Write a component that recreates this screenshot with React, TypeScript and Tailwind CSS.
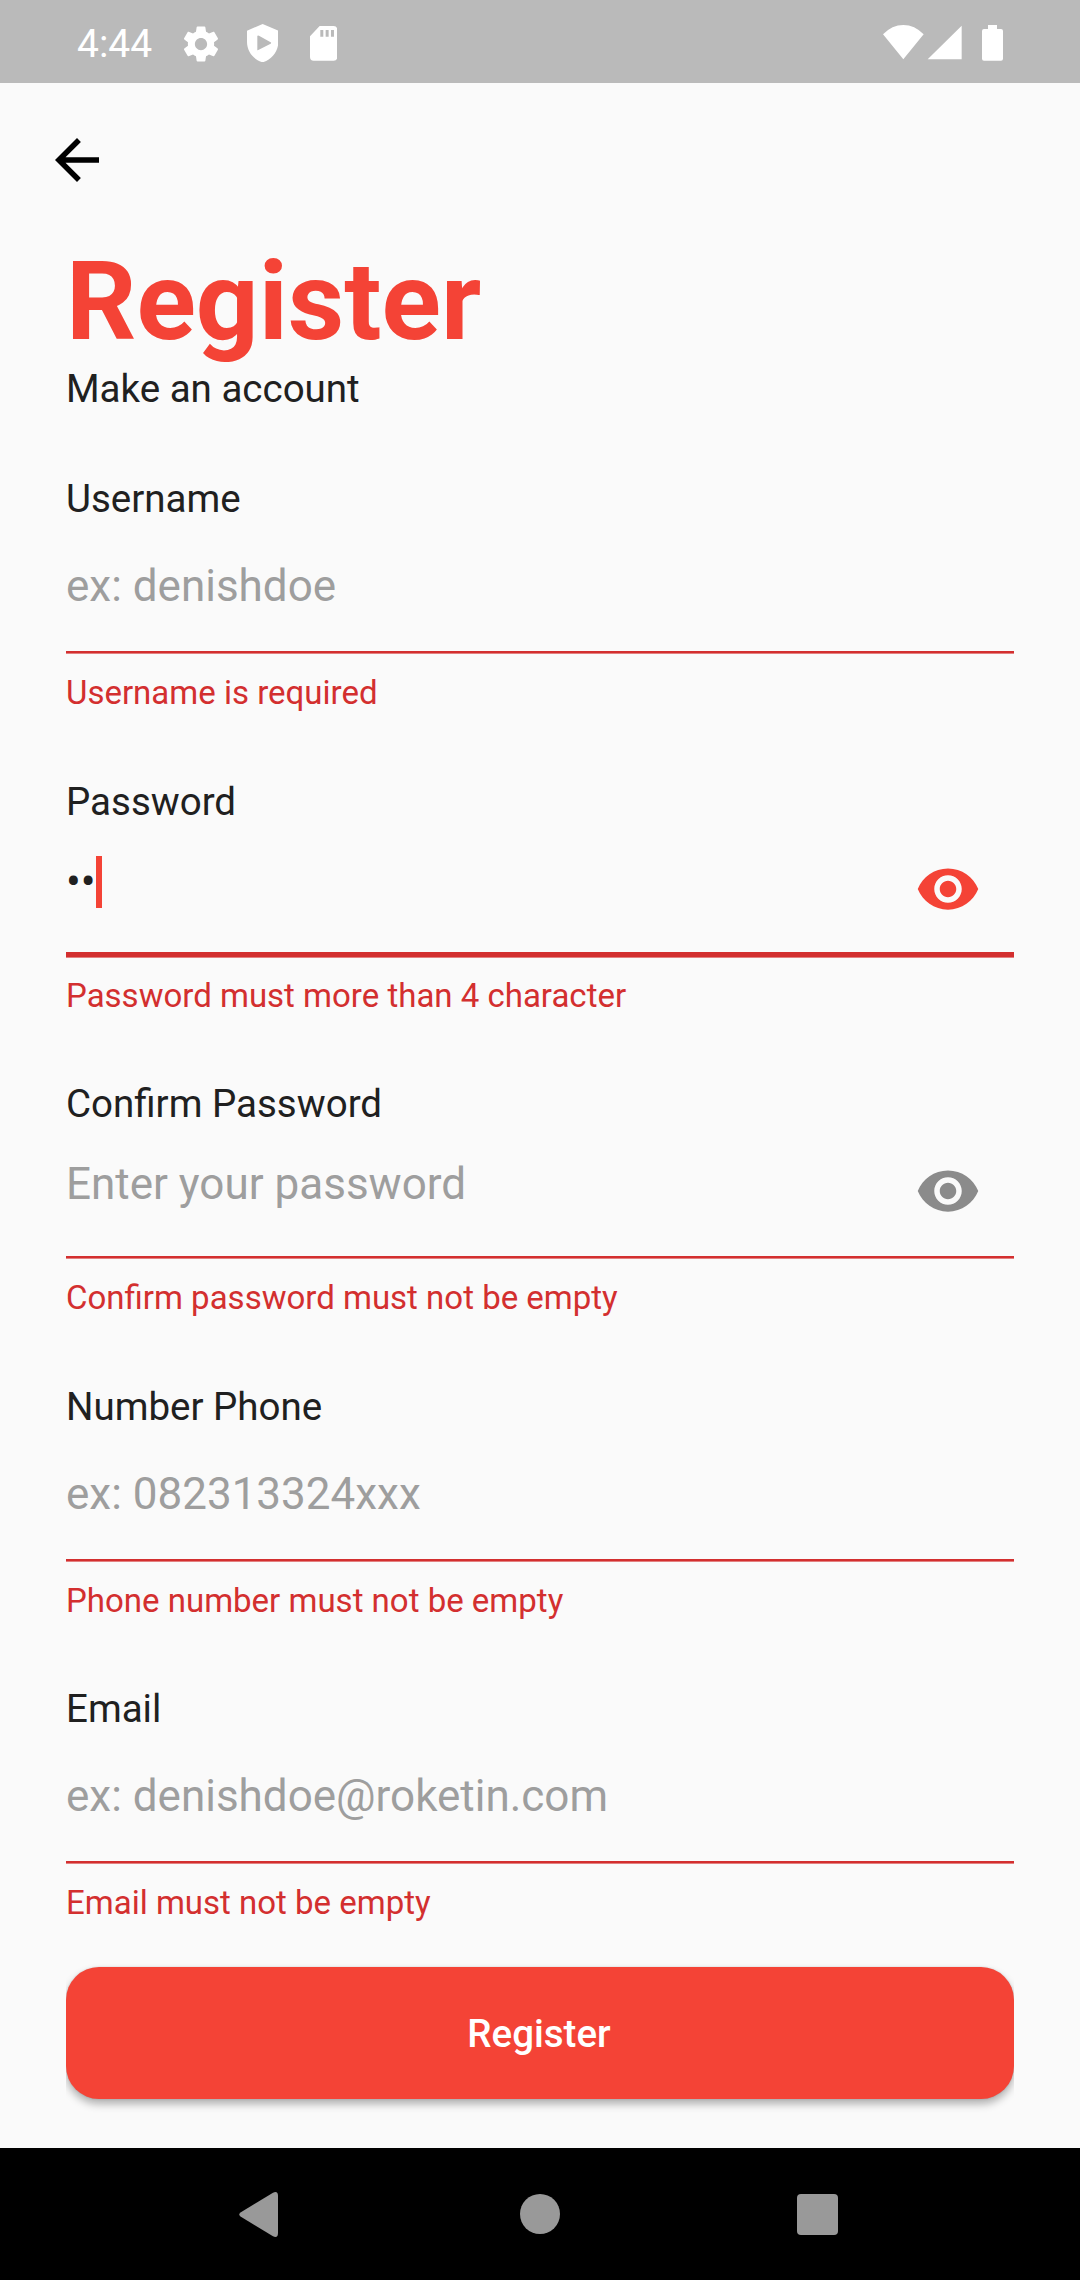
import React from 'react';

const EYE = 'M12 4.5C7 4.5 2.73 7.61 1 12c1.73 4.39 6 7.5 11 7.5s9.27-3.11 11-7.5c-1.73-4.39-6-7.5-11-7.5zM12 17c-2.76 0-5-2.24-5-5s2.24-5 5-5 5 2.24 5 5-2.24 5-5 5zm0-8c-1.66 0-3 1.34-3 3s1.34 3 3 3 3-1.34 3-3-1.34-3-3-3z';
const GEAR = 'M19.43 12.98c.04-.32.07-.64.07-.98s-.03-.66-.07-.98l2.11-1.65c.19-.15.24-.42.12-.64l-2-3.46c-.12-.22-.39-.3-.61-.22l-2.49 1c-.52-.4-1.08-.73-1.69-.98l-.38-2.65C14.46 2.18 14.25 2 14 2h-4c-.25 0-.46.18-.49.42l-.38 2.65c-.61.25-1.17.59-1.69.98l-2.49-1c-.23-.09-.49 0-.61.22l-2 3.46c-.13.22-.07.49.12.64l2.11 1.65c-.04.32-.07.65-.07.98s.03.66.07.98l-2.11 1.65c-.19.15-.24.42-.12.64l2 3.46c.12.22.39.3.61.22l2.49-1c.52.4 1.08.73 1.69.98l.38 2.65c.03.24.24.42.49.42h4c.25 0 .46-.18.49-.42l.38-2.65c.61-.25 1.17-.59 1.69-.98l2.49 1c.23.09.49 0 .61-.22l2-3.46c.12-.22.07-.49-.12-.64l-2.11-1.65zM12 15.5c-1.93 0-3.5-1.57-3.5-3.5s1.57-3.5 3.5-3.5 3.5 1.57 3.5 3.5-1.57 3.5-3.5 3.5z';
const BACK = 'M20 11H7.83l5.59-5.59L12 4l-8 8 8 8 1.41-1.41L7.83 13H20v-2z';
const SHIELD = 'M47 0L94 20V54C94 83 73 108 47 115C21 108 0 83 0 54V20ZM31 37V77Q31 80 34 78L71 59Q74 57 71 55L36 35Q31 33 31 37Z';
const SD_CARD = 'M29 0H71Q82 0 82 11V93Q82 104 71 104H11Q0 104 0 93V31ZM31 12V32H40V12ZM47 12V32H56V12ZM63 12V32H72V12Z';
const STATUS = 'M0 28Q27 0 61 0T122 28L61 103ZM134 103L236 2V103ZM315 0H342V12H354Q360 12 360 18V101Q360 107 354 107H303Q297 107 297 101V18Q297 12 303 12H315Z';

type IconProps = { d: string; className: string; viewBox?: string };

function Icon({ d, className, viewBox = '0 0 24 24' }: IconProps) {
  return (
    <svg viewBox={viewBox} className={`shrink-0 ${className}`} fill="currentColor" fillRule="evenodd">
      <path d={d} />
    </svg>
  );
}

type FieldProps = {
  label: string;
  hint?: string;
  error: string;
  eye?: string;
  focused?: boolean;
  height: string;
};

function Field({ label, hint, error, eye, focused, height }: FieldProps) {
  return (
    <div className={height}>
      <div className="h-[48px] text-[38.5px] leading-[47px] text-[#202020]">{label}</div>
      <div className={`flex justify-between ${focused ? 'h-[126px]' : 'h-[128px]'}`}>
        <div className={`text-[44px] leading-[52px] text-[#9e9e9e] ${eye ? 'pt-[30px]' : 'pt-[37px]'}`}>
          {focused ? (
            <div className="flex h-[52px]">
              <span className="w-[30px] text-[#202020]">••</span>
              <span className="h-[52px] w-[6px] bg-[#f44336]" />
            </div>
          ) : (
            hint
          )}
        </div>
        {eye && <Icon d={EYE} className={`mt-[30px] mr-[33px] h-[66px] w-[66px] ${eye}`} />}
      </div>
      <div className={`bg-[#d32f2f] ${focused ? 'h-[5px]' : 'h-[2px]'}`} />
      <div className="h-px bg-[#d32f2f]/60" />
      <div className={`text-[33px] leading-[39px] text-[#d32f2f] ${focused ? 'pt-[18px]' : 'pt-[19px]'}`}>{error}</div>
    </div>
  );
}

export default function App() {
  return (
    <div className="flex h-[2280px] w-[1080px] flex-col overflow-hidden bg-[#fafafa] font-['Roboto',sans-serif]">
      <header className="flex h-[83px] shrink-0 items-start justify-between bg-[#bababa] pr-[77px] pl-[77px] text-white">
        <div className="flex items-start">
          <span className="w-[103px] pt-[21px] text-[39px] leading-[46px]">4:44</span>
          <Icon d={GEAR} className="mt-[22.5px] h-[42px] w-[42px]" />
          <Icon d={SHIELD} viewBox="0 0 94 115" className="mt-[24px] ml-[24.6px] h-[38.3px] w-[31.3px]" />
          <Icon d={SD_CARD} viewBox="0 0 82 104" className="mt-[26px] ml-[31.7px] h-[34.7px] w-[27.3px]" />
        </div>
        <Icon d={STATUS} viewBox="0 0 360 108" className="mt-[25px] h-[36px] w-[120px]" />
      </header>
      <main className="h-[2065px] shrink-0 px-[66px] pt-[44px]">
        <Icon d={BACK} className="-ml-[22px] h-[66px] w-[66px] text-black" />
        <h1 className="mt-[44px] text-[110px] leading-[129px] font-bold text-[#f44336]">Register</h1>
        <p className="h-[47px] text-[38.5px] leading-[45px] text-[#202020]">Make an account</p>
        <div className="mt-[62px]">
          <Field height="h-[303px]" label="Username" hint="ex: denishdoe" error="Username is required" />
          <Field height="h-[302px]" label="Password" error="Password must more than 4 character" eye="text-[#f44336]" focused />
          <Field height="h-[303px]" label="Confirm Password" hint="Enter your password" error="Confirm password must not be empty" eye="text-[#8b8b8b]" />
          <Field height="h-[302px]" label="Number Phone" hint="ex: 082313324xxx" error="Phone number must not be empty" />
          <Field height="h-[282px]" label="Email" hint="ex: denishdoe@roketin.com" error="Email must not be empty" />
        </div>
        <div className="[clip-path:inset(-20px_0)]">
          <button className="block h-[132px] w-full rounded-[33px] bg-[#f44336] pt-[2px] pr-[2px] text-[38.5px] font-medium text-white shadow-[0_5px_8px_rgba(0,0,0,0.3),0_0_2px_rgba(0,0,0,0.15)]">
            Register
          </button>
        </div>
      </main>
      <nav className="flex h-[132px] shrink-0 items-center bg-black pl-[239px] text-[#999999]">
        <Icon d="M1.5 20.5L34 .7Q39 -1.5 39 4V41Q39 46.5 34 44.3L1.5 24.5Q-1 22.5 1.5 20.5Z" viewBox="0 0 39 45" className="h-[45px] w-[39px]" />
        <span className="ml-[242px] h-[40px] w-[40px] rounded-full bg-[#999999]" />
        <span className="mt-px ml-[237px] h-[41px] w-[41px] rounded-[4px] bg-[#999999]" />
      </nav>
    </div>
  );
}
